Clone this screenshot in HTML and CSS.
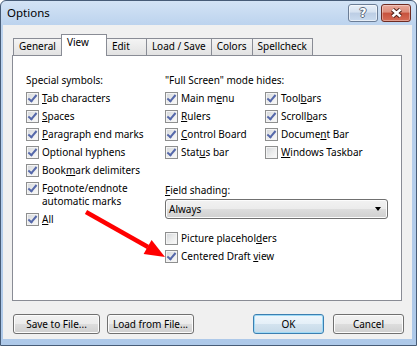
FILE: index.html
```html
<!DOCTYPE html>
<html>
  <head>
    <title>Options</title>
    <meta name="viewport" content="width=device-width, initial-scale=1.0" />
    <link rel="stylesheet" href="styles.css">
  </head>
  <body>
    <div class="window">
      <div class="titlebar">
        <span class="title">Options</span>
        <button class="cap-btn help">?</button>
        <button class="cap-btn close">
          <svg width="13" height="10" viewBox="0 0 13 10">
            <path d="M2.5 1.5 L10.5 8.5 M10.5 1.5 L2.5 8.5" stroke="#4b1d16" stroke-width="4.4" />
            <path d="M2.5 1.5 L10.5 8.5 M10.5 1.5 L2.5 8.5" stroke="#fff" stroke-width="2.4" />
          </svg>
        </button>
      </div>
      <div class="client">
        <div class="tabs">
          <div class="tab">General</div>
          <div class="tab selected">View</div>
          <div class="tab">Edit</div>
          <div class="tab">Load / Save</div>
          <div class="tab">Colors</div>
          <div class="tab">Spellcheck</div>
        </div>
        <div class="panel">
          <div class="col col-symbols">
            <div class="heading">Special symbols:</div>
            <div class="check"><span class="box on"></span><span><u>T</u>ab characters</span></div>
            <div class="check"><span class="box on"></span><span><u>S</u>paces</span></div>
            <div class="check"><span class="box on"></span><span><u>P</u>aragraph end marks</span></div>
            <div class="check"><span class="box on"></span><span>Optional hyphens</span></div>
            <div class="check"><span class="box on"></span><span>Book<u>m</u>ark delimiters</span></div>
            <div class="check"><span class="box on"></span><span>F<u>o</u>otnote/endnote<br />automatic marks</span></div>
            <div class="check"><span class="box on"></span><span><u>A</u>ll</span></div>
          </div>
          <div class="col col-screen">
            <div class="heading">"Full Screen" mode hides:</div>
            <div class="screen-grid">
              <div class="check"><span class="box on"></span><span>Main m<u>e</u>nu</span></div>
              <div class="check"><span class="box on"></span><span>Tool<u>b</u>ars</span></div>
              <div class="check"><span class="box on"></span><span><u>R</u>ulers</span></div>
              <div class="check"><span class="box on"></span><span>Scroll<u>b</u>ars</span></div>
              <div class="check"><span class="box on"></span><span><u>C</u>ontrol Board</span></div>
              <div class="check"><span class="box on"></span><span>Docume<u>n</u>t Bar</span></div>
              <div class="check"><span class="box on"></span><span>Stat<u>u</u>s bar</span></div>
              <div class="check"><span class="box"></span><span><u>W</u>indows Taskbar</span></div>
            </div>
            <div class="field-label"><u>F</u>ield shading:</div>
            <div class="select"><span>Always</span><span class="caret"></span></div>
            <div class="check picture"><span class="box"></span><span>Picture placehol<u>d</u>ers</span></div>
            <div class="check"><span class="box on"></span><span>Centered Draft <u>v</u>iew</span></div>
          </div>
        </div>
        <div class="actions">
          <button class="btn">Save to File...</button>
          <button class="btn">Load from File...</button>
          <button class="btn ok">OK</button>
          <button class="btn small">Cancel</button>
        </div>
      </div>
      <svg class="annotation" width="417" height="346" viewBox="0 0 417 346">
        <line x1="86" y1="212" x2="148" y2="247" stroke="#f00" stroke-width="4.5" />
        <polygon points="165,257 143.6,254 151.6,240.1" fill="#f00" />
      </svg>
    </div>
  </body>
</html>
```

FILE: styles.css
```css
body {
  margin: 0;
  font-family: "Noto Sans", "Open Sans", sans-serif;
  font-size: 10px;
  color: #000;
  background: #fff;
}
.window {
  position: relative;
  width: 417px;
  height: 346px;
  box-sizing: border-box;
  border: 1px solid #475c77;
  border-radius: 6px 6px 0 0;
  background: linear-gradient(#d3e3f5 0, #bcd3ee 24px, #aec9e9 100%);
  display: flex;
  flex-direction: column;
}
.titlebar {
  height: 24px;
  flex: none;
  display: flex;
  align-items: flex-start;
  padding-right: 5px;
}
.title {
  flex: 1;
  font-size: 11.5px;
  line-height: 16px;
  margin: 4px 0 0 6px;
}
.cap-btn {
  width: 30px;
  height: 18px;
  margin: 3px 0 0 3px;
  padding: 0;
  box-sizing: border-box;
  border: 1px solid;
  border-radius: 3px;
  display: flex;
  align-items: center;
  justify-content: center;
}
.help {
  border-color: #6b7d96;
  background: linear-gradient(#e8eff8, #d5e1f0 45%, #bccde4 50%, #cadbef 100%);
  box-shadow: inset 0 0 0 1px rgba(255, 255, 255, 0.55);
  font-family: "DejaVu Sans", sans-serif;
  font-weight: bold;
  font-size: 12px;
  color: #fff;
  text-shadow: 1px 0 #5a687b, -1px 0 #5a687b, 0 1px #5a687b, 0 -1px #5a687b;
}
.close {
  border-color: #6e2b22;
  background: linear-gradient(#eaa99b, #dc8d7b 45%, #c7513c 50%, #d66c56 100%);
  box-shadow: inset 0 0 0 1px rgba(255, 255, 255, 0.35);
}
.client {
  flex: 1;
  margin: 0 4px 6px 2px;
  padding: 9px 0 5px;
  background: #f0f0f0;
  display: flex;
  flex-direction: column;
}
/* tab strip */
.tabs {
  height: 21px;
  display: flex;
  align-items: flex-end;
  padding-left: 10px;
}
.tab {
  height: 17px;
  min-width: 41px;
  box-sizing: border-box;
  padding: 0 5px;
  margin-right: -1px;
  border: 1px solid #898c95;
  border-bottom: 0;
  line-height: 15px;
  background: linear-gradient(#f4f4f4, #ebebeb 50%, #e2e2e2);
}
.tab.selected {
  position: relative;
  z-index: 1;
  height: 22px;
  min-width: 46px;
  margin-bottom: -1px;
  background: #fff;
}
.panel {
  height: 246px;
  box-sizing: border-box;
  margin: 0 10px 0 9px;
  padding: 18px 13px 0;
  border: 1px solid #898c95;
  background: #fff;
  display: flex;
}
.col {
  display: flex;
  flex-direction: column;
  gap: 5px;
}
.col-symbols {
  width: 140px;
}
.col-screen {
  flex: 1;
}
.heading,
.check,
.field-label {
  line-height: 13px;
}
.check {
  display: flex;
  gap: 3px;
  align-items: flex-start;
  white-space: nowrap;
}
u {
  text-decoration-thickness: 1px;
  text-underline-offset: 1px;
}
.box {
  position: relative;
  flex: none;
  width: 13px;
  height: 13px;
  box-sizing: border-box;
  border: 1px solid #8e8f8f;
  background: linear-gradient(135deg, #d2d5d9 0%, #eceded 55%, #fbfbfb 100%);
  box-shadow: inset 0 0 0 1px #f4f4f4;
}
.box.on::after {
  content: "";
  position: absolute;
  left: 3px;
  top: 0;
  width: 3px;
  height: 7px;
  border: solid #5568aa;
  border-width: 0 2px 2px 0;
  transform: rotate(40deg);
}
.screen-grid {
  display: grid;
  grid-template-columns: 100px auto;
  row-gap: 5px;
}
.field-label {
  margin-top: 20px;
}
.select {
  width: 223px;
  height: 20px;
  margin-top: -3px;
  box-sizing: border-box;
  padding: 0 6px 0 3px;
  border: 1px solid #707070;
  border-radius: 3px;
  background: linear-gradient(#f2f2f2, #ebebeb 50%, #dddddd 51%, #cfcfcf);
  box-shadow: inset 0 0 0 1px #fcfcfc;
  display: flex;
  align-items: center;
  justify-content: space-between;
}
.caret {
  width: 0;
  height: 0;
  border-left: 3.5px solid transparent;
  border-right: 3.5px solid transparent;
  border-top: 4px solid #000;
}
.picture {
  margin-top: 8px;
}
.actions {
  display: flex;
  gap: 7px;
  margin-top: 13px;
  padding: 0 8px 0 10px;
}
.btn {
  width: 87px;
  height: 20px;
  box-sizing: border-box;
  padding: 0;
  border: 1px solid #707070;
  border-radius: 3px;
  background: linear-gradient(#f2f2f2, #ebebeb 50%, #dddddd 51%, #cfcfcf);
  box-shadow: inset 0 0 0 1px #fcfcfc;
  font: inherit;
  color: #000;
}
.btn.ok {
  width: 71px;
  margin-left: auto;
  margin-right: 2px;
  border-color: #3c7fb1;
  background: linear-gradient(#f0f7fc, #e4eff8 50%, #d3e3ef 51%, #c6d9e8);
  box-shadow: inset 0 0 0 1px #9fdaf6;
}
.btn.small {
  width: 71px;
}
.annotation {
  position: absolute;
  left: -1px;
  top: -1px;
  z-index: 2;
  pointer-events: none;
}
```
